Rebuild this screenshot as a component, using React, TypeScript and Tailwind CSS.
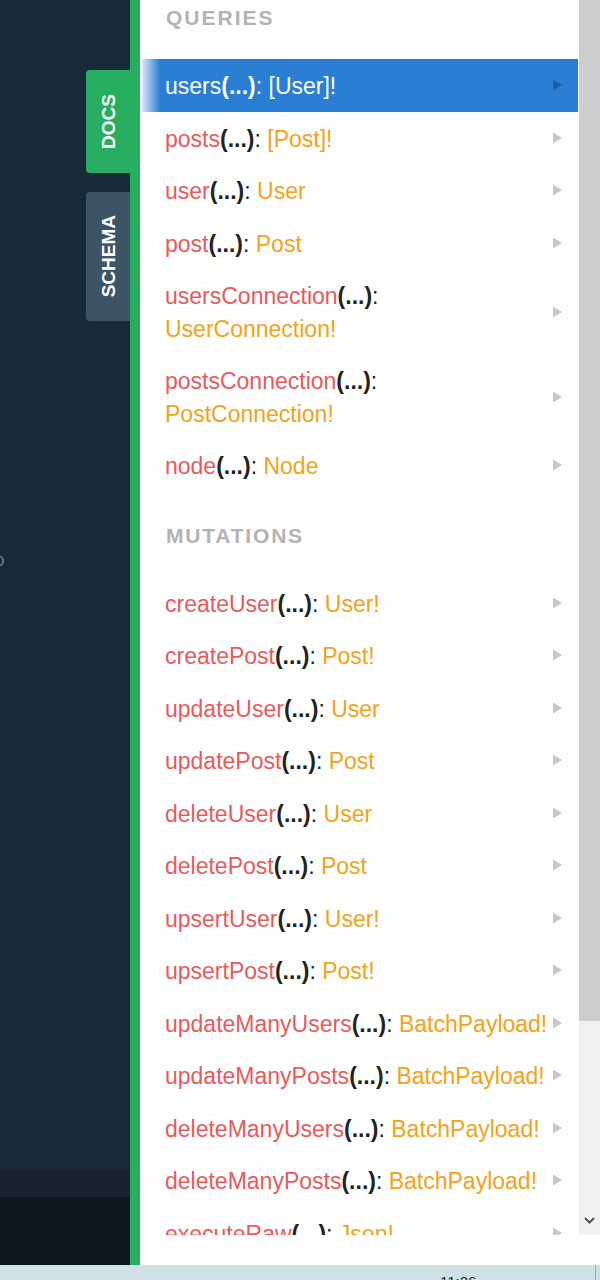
const queries = [
    { name: 'users', type: '[User]!' },
    { name: 'posts', type: '[Post]!' },
    { name: 'user', type: 'User' },
    { name: 'post', type: 'Post' },
    { name: 'usersConnection', type: 'UserConnection!', wrap: true },
    { name: 'postsConnection', type: 'PostConnection!', wrap: true },
    { name: 'node', type: 'Node' },
];

const mutations = [
    { name: 'createUser', type: 'User!' },
    { name: 'createPost', type: 'Post!' },
    { name: 'updateUser', type: 'User' },
    { name: 'updatePost', type: 'Post' },
    { name: 'deleteUser', type: 'User' },
    { name: 'deletePost', type: 'Post' },
    { name: 'upsertUser', type: 'User!' },
    { name: 'upsertPost', type: 'Post!' },
    { name: 'updateManyUsers', type: 'BatchPayload!' },
    { name: 'updateManyPosts', type: 'BatchPayload!' },
    { name: 'deleteManyUsers', type: 'BatchPayload!' },
    { name: 'deleteManyPosts', type: 'BatchPayload!' },
    { name: 'executeRaw', type: 'Json!' },
];

type Field = { name: string; type: string; wrap?: boolean };

function Arrow({ active }: { active?: boolean }) {
    return (
        <svg
            width="9"
            height="11"
            viewBox="0 0 9 11"
            className="absolute right-[16px] top-1/2 -translate-y-1/2"
        >
            <polygon points="0,0 9,5.5 0,11" fill={active ? '#1d5fa6' : '#c6c6c6'} />
        </svg>
    );
}

function FieldRow({ field, active }: { field: Field; active?: boolean }) {
    return (
        <div
            className={
                active
                    ? 'relative ml-[2px] pt-[11px] pb-[9px] pl-[23px] pr-[20px] leading-[32.5px] text-white bg-[linear-gradient(to_right,#dce9f7_0px,#2a7ed3_18px)]'
                    : 'relative ml-[2px] pt-[11px] pb-[9px] pl-[23px] pr-[20px] leading-[32.5px]'
            }
        >
            <div className={field.wrap ? '' : 'whitespace-nowrap'}>
                <span className={active ? '' : 'text-[#e85a5c]'}>{field.name}</span>
                <span className={active ? 'font-bold' : 'font-bold text-[#222]'}>(...)</span>
                <span className={active ? '' : 'text-[#222]'}>: </span>
                {field.wrap && <br />}
                <span className={active ? '' : 'text-[#f2a319]'}>{field.type}</span>
            </div>
            <Arrow active={active} />
        </div>
    );
}

export default function App() {
    return (
        <div className="w-[600px] h-[1280px] flex flex-col overflow-hidden bg-white font-['Liberation_Sans',Arial,sans-serif]">
            <div className="h-[1265px] flex">
                {/* Left editor area with side tabs */}
                <div className="w-[130px] flex flex-col bg-[#172a3a]">
                    <div className="flex flex-col items-end gap-[19px] pt-[70px]">
                        <div className="w-[44px] h-[103px] flex items-center justify-center rounded-l-[4px] bg-[#27ae60]">
                            <span className="[writing-mode:vertical-rl] rotate-180 text-[19px] font-bold text-white leading-none">
                                DOCS
                            </span>
                        </div>
                        <div className="w-[44px] h-[129px] flex items-center justify-center rounded-l-[4px] bg-[#3d5466]">
                            <span className="[writing-mode:vertical-rl] rotate-180 text-[19px] font-bold text-white leading-none">
                                SCHEMA
                            </span>
                        </div>
                    </div>
                    <div className="mt-[229px] -ml-[6px] h-[20px] text-[19px] leading-[20px] text-[#6b7884]">o</div>
                    <div className="flex-1" />
                    <div className="h-[27px] bg-[#18232f]" />
                    <div className="h-[68px] bg-[#0c1720]" />
                </div>

                <div className="w-[10px] bg-[#27ae60]" />

                {/* Docs panel */}
                <div className="flex-1 flex flex-col">
                    <div className="h-[1235px] flex">
                        <div className="w-[438px] overflow-hidden text-[23px]">
                            <div className="h-[59px] pt-[6px] pl-[26px] text-[21px] leading-[24px] font-bold tracking-[2px] text-[#b3b3b3]">
                                QUERIES
                            </div>
                            {queries.map((q, i) => (
                                <FieldRow key={q.name} field={q} active={i === 0} />
                            ))}
                            <div className="h-[85px] pt-[32px] pl-[26px] text-[21px] leading-[24px] font-bold tracking-[1.8px] text-[#b3b3b3]">
                                MUTATIONS
                            </div>
                            {mutations.map((m) => (
                                <FieldRow key={m.name} field={m} />
                            ))}
                        </div>
                        {/* Scrollbar */}
                        <div className="w-[22px] flex flex-col pl-[1px]">
                            <div className="h-[1021px] bg-[#cdcdcd]" />
                            <div className="flex-1 flex flex-col items-center justify-end pb-[11px] bg-[#f1f1f1]">
                                <svg width="11" height="7" viewBox="0 0 11 7">
                                    <polyline points="1,1 5.5,5.5 10,1" fill="none" stroke="#505050" strokeWidth="2" />
                                </svg>
                            </div>
                        </div>
                    </div>
                    <div className="flex-1 bg-white" />
                </div>
            </div>

            {/* Taskbar strip */}
            <div className="h-[15px] flex justify-between overflow-hidden bg-[#cfe1e7]">
                <span className="ml-[440px] pt-[8px] text-[15px] leading-[18px] text-[#222]">11:26</span>
                <div className="w-px h-full mr-[4px] bg-[#9aa9b0]" />
            </div>
        </div>
    );
}
